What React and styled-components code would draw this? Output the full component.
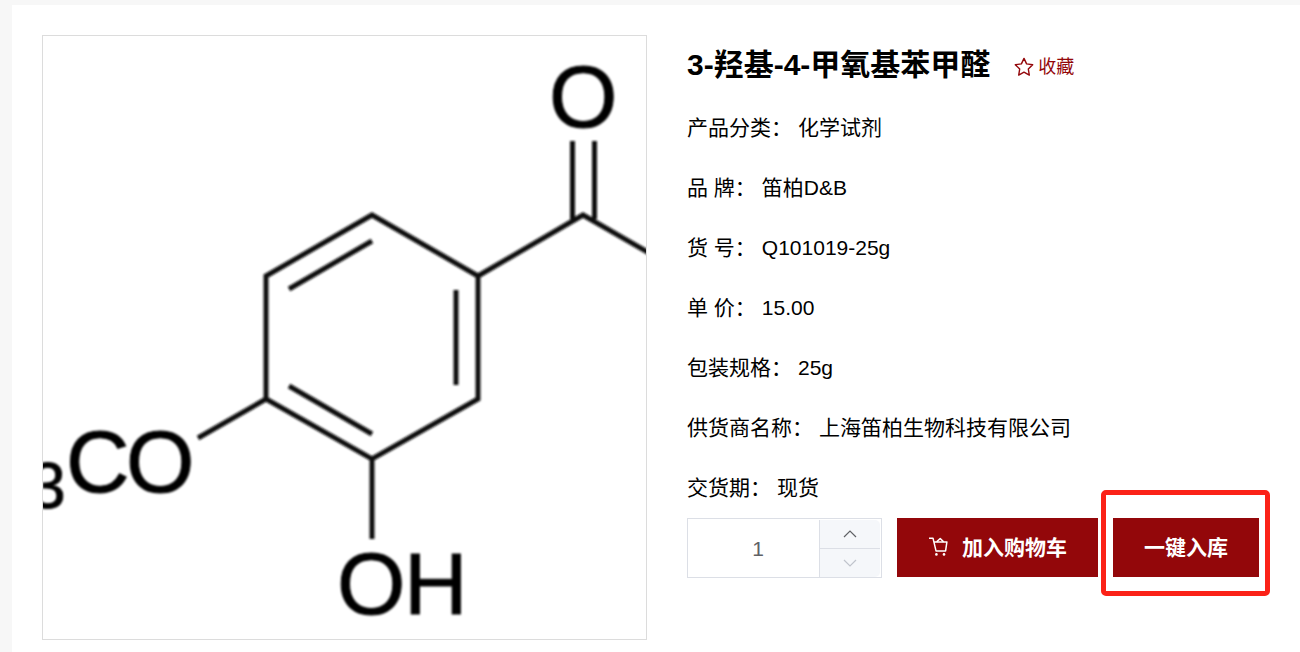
import React, { useState } from "react";
import styled, { createGlobalStyle } from "styled-components";

const GlobalStyle = createGlobalStyle`
  *, *::before, *::after { box-sizing: border-box; }
  body {
    margin: 0;
    background: #f7f7f7;
    color: #000;
    font-family: "Liberation Sans", "Noto Sans CJK SC", sans-serif;
    font-size: 21px;
  }
  button, input { font: inherit; }
`;

const Page = styled.div`
  padding: 5px 0 0 12px;
`;

const Card = styled.main`
  display: grid;
  grid-template-columns: minmax(0, 605fr) minmax(0, 583fr);
  gap: 40px;
  align-items: start;
  min-height: calc(100vh - 5px);
  padding: 30px 30px 12px;
  background: #fff;
`;

const Figure = styled.figure`
  margin: 0;
  aspect-ratio: 1;
  border: 1px solid #dcdcdc;
  overflow: hidden;

  svg {
    display: block;
    width: 100%;
    height: 100%;
  }
`;

const Heading = styled.header`
  display: flex;
  align-items: center;
  gap: 24px;
  margin-bottom: 3px;
  line-height: 60px;
`;

const Title = styled.h1`
  margin: 0;
  font-size: 30px;
  font-weight: 700;
  white-space: nowrap;
`;

const Favourite = styled.button`
  display: flex;
  align-items: center;
  gap: 4px;
  padding: 4px 0 0;
  border: 0;
  background: none;
  color: #93070a;
  font-size: 18px;
  line-height: 24px;
  white-space: nowrap;
  cursor: pointer;
`;

const Specs = styled.dl`
  margin: 0;
`;

const Spec = styled.div`
  display: flex;
  gap: 6px;
  line-height: 60px;

  dt { white-space: nowrap; }
  dd { margin: 0; }
`;

const Actions = styled.div`
  display: flex;
  align-items: flex-start;
  gap: 15px;
`;

const Quantity = styled.div`
  display: flex;
  width: 195px;
  height: 60px;
  padding: 1px 1px 0;
  border: 1px solid #dcdfe6;
`;

const QuantityInput = styled.input`
  flex: 1;
  min-width: 0;
  padding: 0 0 0 8px;
  border: 0;
  outline: 0;
  background: none;
  color: #606266;
  text-align: center;
  appearance: textfield;

  &::-webkit-inner-spin-button,
  &::-webkit-outer-spin-button {
    margin: 0;
    appearance: none;
  }
`;

const Stepper = styled.div`
  display: grid;
  grid-template-rows: 1fr 1fr;
  width: 61px;
  border-left: 1px solid #dcdfe6;
  border-radius: 0 5px 5px 0;
  background: #f5f7fa;
  overflow: hidden;
`;

const StepButton = styled.button`
  display: flex;
  align-items: center;
  justify-content: center;
  padding: 0;
  border: 0;
  background: none;
  color: #606266;
  cursor: pointer;

  &:first-child { border-bottom: 1px solid #dcdfe6; }
  &:disabled { color: #c0c4cc; cursor: not-allowed; }
`;

const ActionButton = styled.button`
  display: flex;
  align-items: center;
  gap: 13px;
  height: 59px;
  padding: 0 31px 3px;
  border: 0;
  background: #93070a;
  color: #fff;
  font-weight: 700;
  white-space: nowrap;
  cursor: pointer;
`;

const Highlight = styled.div`
  position: relative;

  &::after {
    content: "";
    position: absolute;
    inset: -28px -11px -19px -12px;
    border: 5px solid #fb2218;
    border-radius: 5px;
    pointer-events: none;
  }
`;

const StarIcon = () => (
  <svg width="20" height="20" viewBox="0 0 20 20" fill="none" stroke="currentColor" strokeWidth="1.4" strokeLinejoin="round" aria-hidden="true">
    <path d="M10 1.4 12.6 6.9 18.7 7.7 14.3 12 15.3 18.1 10 15.2 4.7 18.1 5.7 12 1.3 7.7 7.4 6.9Z" />
  </svg>
);

const CartIcon = () => (
  <svg width="21" height="21" viewBox="0 0 21 21" fill="none" stroke="currentColor" strokeWidth="1.5" strokeLinejoin="round" aria-hidden="true">
    <path d="M1 2.2H5L8 14.9H17.6L18.9 5.9H5.9" />
    <path d="M8.6 5.9 12.2 2.5 15.6 5.9" />
    <circle cx="8.4" cy="18.4" r="1.3" fill="currentColor" stroke="none" />
    <circle cx="16" cy="18.4" r="1.3" fill="currentColor" stroke="none" />
  </svg>
);

const Chevron = ({ down }) => (
  <svg width="14" height="8" viewBox="0 0 14 8" fill="none" stroke="currentColor" strokeWidth="1.2" aria-hidden="true">
    <path d={down ? "M1 1 7 7 13 1" : "M1 7 7 1 13 7"} />
  </svg>
);

const Molecule = () => (
  <svg viewBox="43 36 603 603" role="img" aria-label="3-羟基-4-甲氧基苯甲醛">
    <defs>
      <filter id="soft" filterUnits="userSpaceOnUse" x="0" y="0" width="700" height="700">
        <feGaussianBlur stdDeviation="1" />
      </filter>
    </defs>
    <g filter="url(#soft)">
      <path
        d="M372 215 478 276V399L372 459 266 399V276ZM289 289 372 241M456 290V385M289 386 372 434M478 276 583 215 656 257M572.5 141V219M594.5 141V219M266 399 198 438M372 459V539"
        fill="none"
        stroke="#111"
        strokeWidth="5"
      />
      <g fill="#000" stroke="#000" strokeWidth="1" fontFamily="Liberation Sans, sans-serif" fontSize="88">
        <text x="549" y="127">O</text>
        <text x="66" y="492">C</text>
        <text x="126" y="492">O</text>
        <text x="30" y="508" fontSize="64">3</text>
        <text x="337" y="614">O</text>
        <text x="404" y="614">H</text>
      </g>
    </g>
  </svg>
);

const specs = [
  ["产品分类：", "化学试剂"],
  ["品 牌：", "笛柏D&B"],
  ["货 号：", "Q101019-25g"],
  ["单 价：", "15.00"],
  ["包装规格：", "25g"],
  ["供货商名称：", "上海笛柏生物科技有限公司"],
  ["交货期：", "现货"],
];

export default function App() {
  const [count, setCount] = useState(1);

  return (
    <Page>
      <GlobalStyle />
      <Card>
        <Figure>
          <Molecule />
        </Figure>
        <section>
          <Heading>
            <Title>3-羟基-4-甲氧基苯甲醛</Title>
            <Favourite type="button">
              <StarIcon />
              收藏
            </Favourite>
          </Heading>
          <Specs>
            {specs.map(([label, value]) => (
              <Spec key={label}>
                <dt>{label}</dt>
                <dd>{value}</dd>
              </Spec>
            ))}
          </Specs>
          <Actions>
            <Quantity>
              <QuantityInput
                type="number"
                min="1"
                aria-label="数量"
                value={count}
                onChange={(e) => setCount(Math.max(1, Number(e.target.value)))}
              />
              <Stepper>
                <StepButton type="button" aria-label="增加" onClick={() => setCount(count + 1)}>
                  <Chevron />
                </StepButton>
                <StepButton type="button" aria-label="减少" disabled={count <= 1} onClick={() => setCount(count - 1)}>
                  <Chevron down />
                </StepButton>
              </Stepper>
            </Quantity>
            <ActionButton type="button">
              <CartIcon />
              加入购物车
            </ActionButton>
            <Highlight>
              <ActionButton type="button">一键入库</ActionButton>
            </Highlight>
          </Actions>
        </section>
      </Card>
    </Page>
  );
}
